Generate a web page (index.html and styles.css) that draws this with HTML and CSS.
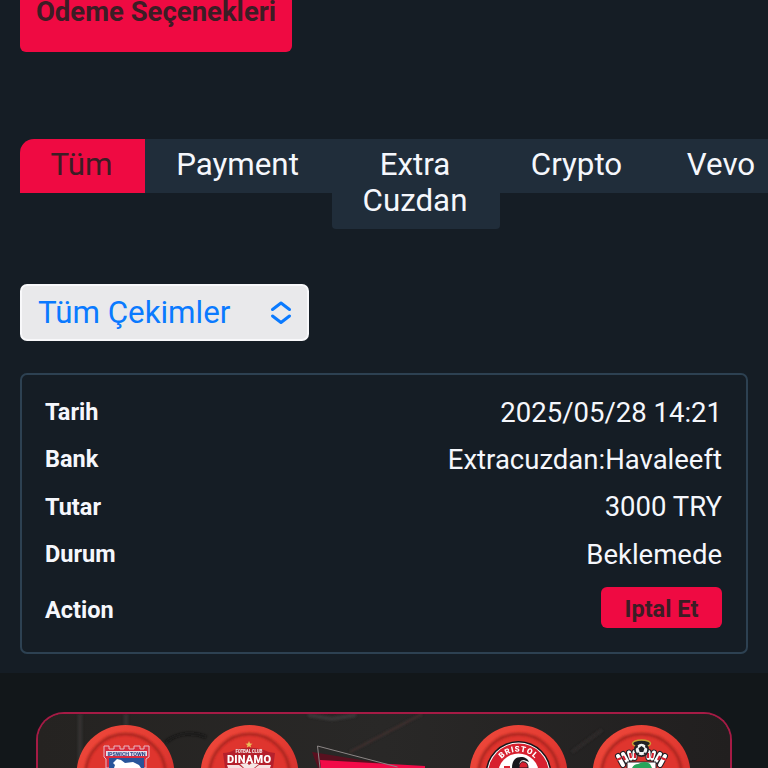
FILE: index.html
```html
<!DOCTYPE html>
<html lang="tr">
<head>
  <meta charset="utf-8">
  <title>Ödeme Seçenekleri</title>
  <link rel="stylesheet" href="styles.css">
</head>
<body>
  <main class="payments">
    <button class="pay-options">Ödeme Seçenekleri</button>

    <nav class="tabs">
      <a class="tab active">Tüm</a>
      <a class="tab tab-payment">Payment</a>
      <a class="tab tab-extra">Extra Cuzdan</a>
      <a class="tab tab-crypto">Crypto</a>
      <a class="tab tab-vevo">Vevo</a>
    </nav>

    <button class="filter">
      <span>Tüm Çekimler</span>
      <svg width="24" height="26" viewBox="0 0 24 26" fill="none" stroke="#0a7aff" stroke-width="3" stroke-linecap="round" stroke-linejoin="round">
        <path d="M3.500 9.500 12 3l8.500 6.500M3.500 16l8.500 6.500 8.500-6.500"/>
      </svg>
    </button>

    <div class="card">
      <div class="row"><b>Tarih</b><span>2025/05/28 14:21</span></div>
      <div class="row"><b>Bank</b><span>Extracuzdan:Havaleeft</span></div>
      <div class="row"><b>Tutar</b><span>3000 TRY</span></div>
      <div class="row"><b>Durum</b><span>Beklemede</span></div>
      <div class="row row-action"><b>Action</b><button class="cancel">Iptal Et</button></div>
    </div>
  </main>

  <footer class="sponsors">
    <div class="banner">
      <svg width="692" height="54" viewBox="38 714 692 54">
        <defs>
          <linearGradient id="disc" x1="0" y1="0" x2="1" y2="1">
            <stop offset="0" stop-color="#f04a3c"/>
            <stop offset=".5" stop-color="#e33b32"/>
            <stop offset="1" stop-color="#c9282a"/>
          </linearGradient>
          <linearGradient id="back" x1="0" x2="1">
            <stop offset="0" stop-color="#252321"/>
            <stop offset=".5" stop-color="#292827"/>
            <stop offset="1" stop-color="#211f1f"/>
          </linearGradient>
          <filter id="soft" x="-10%" y="-10%" width="120%" height="120%"><feGaussianBlur stdDeviation="1.2"/></filter>
          <g id="badge">
            <circle r="49" fill="url(#disc)"/>
            <circle r="40" fill="#df352e"/>
            <circle r="40" fill="none" stroke="#9c201c" stroke-width="3" opacity=".75" filter="url(#soft)"/>
          </g>
          <path id="arc" d="M496 774a22.500 22.500 0 0 1 45 0"/>
        </defs>

        <rect x="38" y="714" width="692" height="54" fill="url(#back)"/>
        <g filter="url(#soft)" fill="none">
          <path d="M80 714v54M126 714v12" stroke="#3a3836" stroke-width="5" opacity=".6"/>
          <path d="M166 742c12-10 28-10 40-5" stroke="#161616" stroke-width="3" opacity=".7"/>
          <path d="M308 715l24 4 24-4" stroke="#424344" stroke-width="4" opacity=".6"/>
          <path d="M350 752l72-38" stroke="#40302f" stroke-width="2.500"/>
          <path d="M572 752l30-22" stroke="#383432" stroke-width="4" opacity=".5"/>
        </g>

        <use href="#badge" x="125.500" y="774"/>
        <use href="#badge" x="249.500" y="774"/>
        <use href="#badge" x="518.500" y="774"/>
        <use href="#badge" x="641.500" y="774"/>

        <!-- Ipswich -->
        <path d="M104 746h5v3h5v-3h6v3h4v-3h5v3h5v-3h6v3h4v-3h5v11l-3 2v9h-40v-9l-2-2z" fill="#d92b3d" stroke="#e7b9c5" stroke-width="1"/>
        <path d="M106 751h41v5h-41z" fill="#e8dfea"/>
        <text x="126.500" y="755.500" class="crest-text ipswich" textLength="38">IPSWICH TOWN</text>
        <path d="M109 758h35v10h-35z" fill="#27549a"/>
        <path d="M113 763l4-4 4 1 4 3 8-1 6 3 2 3h-27l1-3z" fill="#fff"/>

        <!-- Dinamo -->
        <path d="M249 741l1 2.500 2.500.200-2 1.500.700 2.500-2.200-1.400-2.200 1.400.700-2.500-2-1.500 2.500-.200z" fill="#e8c35b"/>
        <path d="M223 753q7 0 11-3 15-5 30 0 5 3 11 3l-2 15h-48z" fill="#b5202c"/>
        <text x="249" y="752.500" class="crest-text club" textLength="27">FOTBAL CLUB</text>
        <text x="249" y="762.500" class="crest-text dinamo" textLength="44">DINAMO</text>
        <path d="M227 765h12l4 3h-15zM259 765h12l-1 3h-15z" fill="#f6dfe0"/>
        <path d="M240 764l7-1 2 2 3-2 7 1-5 4h-10z" fill="#f4e7e6"/>

        <!-- Bristol -->
        <circle cx="518.500" cy="774" r="33" fill="#15151a"/>
        <circle cx="518.500" cy="774" r="31.500" fill="#fff"/>
        <circle cx="518.500" cy="774" r="30.500" fill="#d7202f"/>
        <circle cx="518.500" cy="774" r="20.500" fill="#fff"/>
        <text class="crest-text bristol"><textPath href="#arc" startOffset="50%">BRISTOL</textPath></text>
        <path d="M512 768c0-8 4-11 9-11 4 0 7 2 8 5l-5-2c-4 0-5 3-5 8z" fill="#17171c"/>
        <path d="M519 768c0-5 3-7 5-6 3 0 4 3 4 6z" fill="#d7202f" stroke="#17171c"/>
        <path d="M504 766h6v2h-6z" fill="#d7202f"/>

        <!-- Southampton -->
        <path d="M618 756l5 9M623 754l4 7M629 752.500l2 6M634.500 752v6M648.500 752v6M654 752.500l-2 6M660 754l-4 7M665 756l-5 9" fill="none" stroke="#222126" stroke-width="6" stroke-linecap="round"/>
        <path d="M618 756l5 9M629 752.500l2 6M654 752.500l-2 6M665 756l-5 9" fill="none" stroke="#fff" stroke-width="4" stroke-linecap="round"/>
        <path d="M623 754l4 7M634.500 752v6M648.500 752v6M660 754l-4 7" fill="none" stroke="#fff" stroke-width="4" stroke-linecap="round"/>
        <path d="M616.500 760l5-2M623 756l2 4M630 753l1 5M635 753v5M648 753v5M653 753l-1 5M660 756l-2 4M661.500 758l5 2" fill="none" stroke="#d4202f" stroke-width="2.200"/>
        <ellipse cx="641.500" cy="743.500" rx="9" ry="3.500" fill="#222126" stroke="#c7a235" stroke-width="1.500"/>
        <circle cx="641.500" cy="749.500" r="7.500" fill="#222126"/>
        <circle cx="641.500" cy="749.500" r="5.700" fill="#f2f2f2"/>
        <path d="M641.500 746l3 2.300-1.200 3.700h-3.600l-1.200-3.700zM635.500 746l2-1 .5 2-1.500 1.500zM647.500 746l-2-1-.5 2 1.500 1.500zM637 754l1-2 1.500 2zM646 754l-1-2-1.500 2z" fill="#222126"/>
        <path d="M627 762h29v7h-29z" fill="#fff" stroke="#222126"/>
        <path d="M632 768q2-4 6-4 7-4 12 0l2 4z" fill="#27a55b"/>

        <!-- centre ribbon -->
        <path d="M312 752l80 13v3h-74z" fill="#59101f"/>
        <path d="M320 760l105 6v2h-104z" fill="#f20b48"/>
        <path d="M320 768l-2.500-22 80 21" fill="none" stroke="#8c8686" stroke-width="1"/>
      </svg>
    </div>
  </footer>
</body>
</html>
```

FILE: styles.css
```css
* {
  box-sizing: border-box;
}
body {
  margin: 0;
  height: 768px;
  overflow: hidden;
  background: #151d25;
  color: #f5f7fc;
  font-family: Roboto, sans-serif;
}
button {
  font-family: inherit;
  border: none;
  padding: 0;
}
.payments {
  display: flex;
  flex-direction: column;
  align-items: flex-start;
  height: 673px;
  padding: 0 20px;
}
.pay-options {
  width: 272px;
  height: 82px;
  margin-top: -30px;
  flex-shrink: 0;
  border-radius: 6px;
  background: #ef0a42;
  color: #3c1d25;
  font-size: 27.5px;
  font-weight: 700;
  white-space: nowrap;
}
.tabs {
  display: flex;
  align-items: flex-start;
  height: 90px;
  margin-top: 87px;
  font-size: 31.3px;
  line-height: 35.5px;
  text-align: center;
}
.tab {
  flex-shrink: 0;
  padding: 8px 29px 10.5px 27px;
  background: #202d3a;
}
.tab.active {
  width: 125px;
  border-radius: 14px 0 0 0;
  background: #ef0a42;
  color: #3c1d25;
}
.tab-payment {
  width: 187px;
}
.tab-extra {
  width: 168px;
  border-radius: 0 0 4px 4px;
}
.tab-crypto {
  width: 155px;
}
.tab-vevo {
  width: 134px;
}
.filter {
  display: flex;
  align-items: center;
  justify-content: space-between;
  width: 289px;
  height: 57px;
  margin-top: 55px;
  padding: 0 14px 0 16px;
  border: 2px solid #f8f8fa;
  border-radius: 7px;
  background: #e9e9eb;
  color: #0a7aff;
  font-size: 31.3px;
}
.card {
  width: 100%;
  height: 281px;
  margin-top: 32px;
  padding: 13.5px 24px 0 23px;
  border: 2px solid #2d4152;
  border-radius: 7px;
}
.row {
  display: flex;
  align-items: center;
  justify-content: space-between;
  height: 47.3px;
  font-size: 27.5px;
}
.row b {
  font-size: 23.5px;
}
.row-action {
  height: 65px;
}
.cancel {
  width: 121px;
  height: 41px;
  margin-bottom: 5px;
  padding-top: 3px;
  border-radius: 6px;
  background: #ef0a42;
  color: #3c1d25;
  font-size: 23.5px;
  font-weight: 700;
}
.sponsors {
  height: 95px;
  padding: 39px 36px 0;
  background: #12171a;
}
.banner {
  height: 56px;
  overflow: hidden;
  border: 2px solid #a51b45;
  border-bottom: none;
  border-radius: 28px 28px 0 0;
  background: #242322;
}
.banner svg {
  display: block;
  width: 100%;
}
.crest-text {
  font-family: Roboto, sans-serif;
  font-weight: 900;
  text-anchor: middle;
}
.ipswich {
  font-size: 5.5px;
  fill: #35508c;
}
.club {
  font-size: 4.5px;
  fill: #f3dddd;
}
.dinamo {
  font-size: 11px;
  fill: #fff;
}
.bristol {
  font-size: 8px;
  letter-spacing: .7px;
  fill: #fff;
}
```
